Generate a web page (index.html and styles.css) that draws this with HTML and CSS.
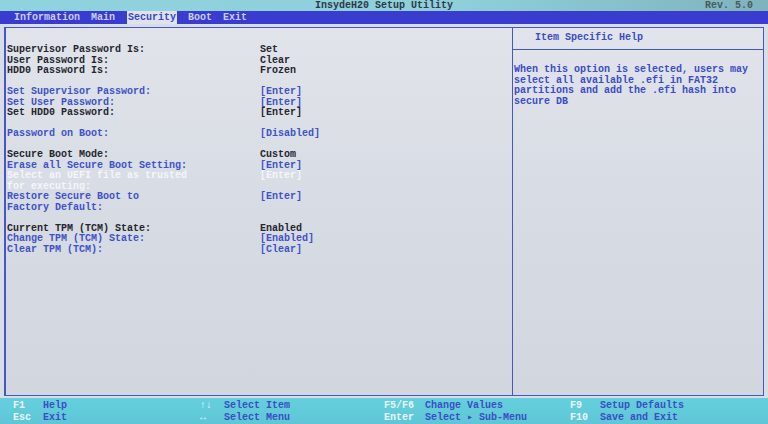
FILE: index.html
```html
<!DOCTYPE html>
<html>
<head>
<meta charset="utf-8">
<link rel="stylesheet" href="styles.css">
</head>
<body>
<div class="screen">
  <div class="titlebar">
    <span></span>
    <span class="title">InsydeH20 Setup Utility</span>
    <span class="rev">Rev. 5.0</span>
  </div>
  <div class="menubar">
    <span class="tab">Information</span>
    <span class="tab">Main</span>
    <span class="tab active">Security</span>
    <span class="tab">Boot</span>
    <span class="tab">Exit</span>
  </div>
  <div class="main">
    <div class="settings">
      <div class="row info"><span>Supervisor Password Is:</span><span>Set</span></div>
      <div class="row info"><span>User Password Is:</span><span>Clear</span></div>
      <div class="row info"><span>HDD0 Password Is:</span><span>Frozen</span></div>
      <div class="row gap"></div>
      <div class="row sel"><span>Set Supervisor Password:</span><span>[Enter]</span></div>
      <div class="row sel"><span>Set User Password:</span><span>[Enter]</span></div>
      <div class="row info"><span>Set HDD0 Password:</span><span>[Enter]</span></div>
      <div class="row gap"></div>
      <div class="row sel"><span>Password on Boot:</span><span>[Disabled]</span></div>
      <div class="row gap"></div>
      <div class="row info"><span>Secure Boot Mode:</span><span>Custom</span></div>
      <div class="row sel"><span>Erase all Secure Boot Setting:</span><span>[Enter]</span></div>
      <div class="row hl"><span>Select an UEFI file as trusted<br>for executing:</span><span>[Enter]</span></div>
      <div class="row sel"><span>Restore Secure Boot to<br>Factory Default:</span><span>[Enter]</span></div>
      <div class="row gap"></div>
      <div class="row info"><span>Current TPM (TCM) State:</span><span>Enabled</span></div>
      <div class="row sel"><span>Change TPM (TCM) State:</span><span>[Enabled]</span></div>
      <div class="row sel"><span>Clear TPM (TCM):</span><span>[Clear]</span></div>
    </div>
    <div class="help">
      <div class="help-head">Item Specific Help</div>
      <div class="help-body">When this option is selected, users may<br>select all available .efi in FAT32<br>partitions and add the .efi hash into<br>secure DB</div>
    </div>
  </div>
  <div class="footer">
    <span class="key">F1</span><span class="desc">Help</span>
    <span class="key">↑↓</span><span class="desc">Select Item</span>
    <span class="key">F5/F6</span><span class="desc">Change Values</span>
    <span class="key">F9</span><span class="desc">Setup Defaults</span>
    <span class="key">Esc</span><span class="desc">Exit</span>
    <span class="key">↔</span><span class="desc">Select Menu</span>
    <span class="key">Enter</span><span class="desc">Select ▸ Sub-Menu</span>
    <span class="key">F10</span><span class="desc">Save and Exit</span>
  </div>
</div>
</body>
</html>
```

FILE: styles.css
```css
* { box-sizing: border-box; }
html, body { margin: 0; padding: 0; }
body {
  width: 768px;
  height: 424px;
  overflow: hidden;
  background: #d9dde5;
  font-family: "Liberation Mono", "DejaVu Sans Mono", monospace;
  font-size: 10px;
  font-weight: bold;
}
.screen {
  display: flex;
  flex-direction: column;
  width: 768px;
  height: 424px;
}
.titlebar {
  height: 11px;
  display: grid;
  grid-template-columns: 1fr auto 1fr;
  align-items: center;
  background: linear-gradient(90deg, #8fd3de 0%, #8fcfd9 60%, #7fb3bc 100%);
  color: #2a3a48;
  line-height: 11px;
}
.rev { justify-self: end; padding-right: 15px; color: #4a5a60; }
.menubar {
  height: 13px;
  display: flex;
  align-items: center;
  gap: 11px;
  padding-left: 14px;
  background: #3a3cd0;
  color: #c9cdf5;
  line-height: 13px;
}
.tab.active {
  background: #dfe2ea;
  color: #3a48c8;
  margin-left: 1px;
  padding: 0 1px;
}
.main {
  flex: 1;
  display: flex;
  margin: 3px 4px 2px 4px;
  border: 1px solid #4656c4;
  border-left-width: 2px;
  background: linear-gradient(180deg, #e1e4ea 0%, #d7dbe3 50%, #d2d6df 100%);
}
.settings {
  width: 507px;
  padding: 17px 0 0 1px;
  border-right: 1px solid #4656c4;
}
.row {
  display: grid;
  grid-template-columns: 253px 1fr;
  line-height: 10.5px;
  min-height: 10.5px;
  white-space: nowrap;
}
.info { color: #25262e; }
.sel { color: #3e52c8; }
.hl { color: #f4f6fa; }
.help {
  flex: 1;
  display: flex;
  flex-direction: column;
  color: #3a4cc6;
}
.help-head {
  height: 22px;
  padding: 5px 0 0 22px;
  line-height: 10.5px;
  border-bottom: 1px solid #4656c4;
}
.help-body {
  padding: 15px 0 0 1px;
  line-height: 10.5px;
  white-space: nowrap;
}
.footer {
  height: 26px;
  display: grid;
  grid-template-columns: 30px 157px 24px 160px 41px 145px 30px 1fr;
  grid-auto-rows: 12px;
  align-content: start;
  padding: 2px 0 0 13px;
  background: linear-gradient(180deg, #66cfdd 0%, #5ec6d6 100%);
  line-height: 12px;
  white-space: nowrap;
}
.key { color: #e9f6fa; }
.desc { color: #3a4ec4; }
```
